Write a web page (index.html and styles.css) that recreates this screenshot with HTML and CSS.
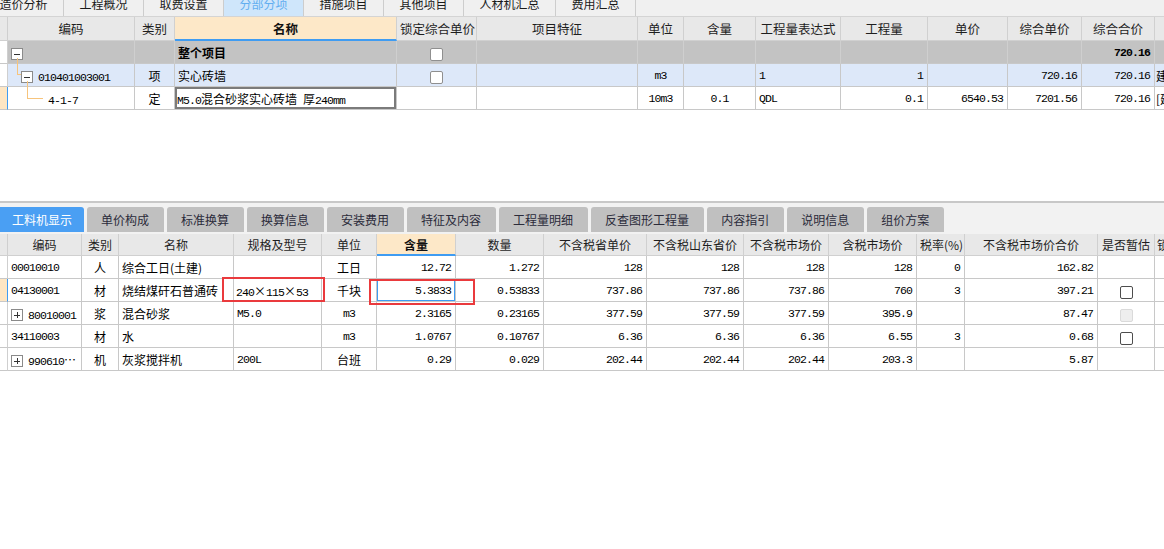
FILE: index.html
```html
<!DOCTYPE html>
<html lang="zh-CN">
<head>
<meta charset="utf-8">
<title>分部分项</title>
<link rel="stylesheet" href="styles.css">
</head>
<body>
<div class="app">
  <div class="toptabs">
    <div class="toptabs-inner">
      <div class="ttab">造价分析</div>
      <div class="ttab">工程概况</div>
      <div class="ttab">取费设置</div>
      <div class="ttab active">分部分项</div>
      <div class="ttab">措施项目</div>
      <div class="ttab">其他项目</div>
      <div class="ttab wide">人材机汇总</div>
      <div class="ttab">费用汇总</div>
    </div>
  </div>

  <div class="gridbox gridbox-top">
    <table class="grid grid-top">
      <colgroup>
        <col><col><col><col><col><col><col><col><col><col><col><col><col><col>
      </colgroup>
      <thead>
        <tr>
          <th class="ind"></th>
          <th>编码</th>
          <th>类别</th>
          <th class="hl">名称</th>
          <th>锁定综合单价</th>
          <th>项目特征</th>
          <th>单位</th>
          <th>含量</th>
          <th>工程量表达式</th>
          <th>工程量</th>
          <th>单价</th>
          <th>综合单价</th>
          <th>综合合价</th>
          <th>取费专业</th>
        </tr>
      </thead>
      <tbody>
        <tr class="row-total">
          <td class="ind"></td>
          <td class="code lvl0"><span class="exp"></span></td>
          <td></td>
          <td class="b">整个项目</td>
          <td class="c"><span class="cb"></span></td>
          <td></td><td></td><td></td><td></td><td></td><td></td><td></td>
          <td class="n r b">720.16</td>
          <td></td>
        </tr>
        <tr class="row-sel">
          <td class="ind"></td>
          <td class="code lvl1"><span class="branch branch-1"></span><span class="exp"></span><span class="n code-text">010401003001</span></td>
          <td class="c">项</td>
          <td>实心砖墙</td>
          <td class="c"><span class="cb"></span></td>
          <td></td>
          <td class="n c">m3</td>
          <td></td>
          <td class="n">1</td>
          <td class="n r">1</td>
          <td></td>
          <td class="n r">720.16</td>
          <td class="n r">720.16</td>
          <td class="tight">建筑工程</td>
        </tr>
        <tr class="row-cur">
          <td class="ind"></td>
          <td class="code lvl2"><span class="branch branch-2"></span><span class="n">4-1-7</span></td>
          <td class="c">定</td>
          <td class="edit"><span class="n">M5.0</span>混合砂浆实心砖墙<span class="n"> </span>厚<span class="n">240mm</span></td>
          <td></td>
          <td></td>
          <td class="n c">10m3</td>
          <td class="n c">0.1</td>
          <td class="n">QDL</td>
          <td class="n r">0.1</td>
          <td class="n r">6540.53</td>
          <td class="n r">7201.56</td>
          <td class="n r">720.16</td>
          <td class="tight">[建筑工程]</td>
        </tr>
      </tbody>
    </table>
  </div>

  <div class="blank"></div>
  <div class="divider"></div>

  <div class="subtabs">
    <div class="stab active">工料机显示</div>
    <div class="stab">单价构成</div>
    <div class="stab">标准换算</div>
    <div class="stab">换算信息</div>
    <div class="stab">安装费用</div>
    <div class="stab">特征及内容</div>
    <div class="stab">工程量明细</div>
    <div class="stab">反查图形工程量</div>
    <div class="stab">内容指引</div>
    <div class="stab">说明信息</div>
    <div class="stab">组价方案</div>
  </div>

  <div class="gridbox gridbox-bottom">
    <table class="grid grid-bottom">
      <colgroup>
        <col><col><col><col><col><col><col><col><col><col><col><col><col><col><col><col>
      </colgroup>
      <thead>
        <tr>
          <th class="ind"></th>
          <th>编码</th>
          <th>类别</th>
          <th>名称</th>
          <th>规格及型号</th>
          <th>单位</th>
          <th class="hl">含量</th>
          <th>数量</th>
          <th>不含税省单价</th>
          <th>不含税山东省价</th>
          <th>不含税市场价</th>
          <th>含税市场价</th>
          <th>税率(%)</th>
          <th>不含税市场价合价</th>
          <th>是否暂估</th>
          <th class="lft">锁定数量</th>
        </tr>
      </thead>
      <tbody>
        <tr>
          <td class="ind"></td>
          <td class="n">00010010</td>
          <td class="c">人</td>
          <td>综合工日(土建)</td>
          <td></td>
          <td class="c">工日</td>
          <td class="n r">12.72</td>
          <td class="n r">1.272</td>
          <td class="n r">128</td>
          <td class="n r">128</td>
          <td class="n r">128</td>
          <td class="n r">128</td>
          <td class="n r">0</td>
          <td class="n r">162.82</td>
          <td></td>
          <td></td>
        </tr>
        <tr class="row-cur">
          <td class="ind"></td>
          <td class="n">04130001</td>
          <td class="c">材</td>
          <td>烧结煤矸石普通砖</td>
          <td class="spec"><span class="n">240</span>×<span class="n">115</span>×<span class="n">53</span></td>
          <td class="c">千块</td>
          <td class="n r sel">5.3833</td>
          <td class="n r">0.53833</td>
          <td class="n r">737.86</td>
          <td class="n r">737.86</td>
          <td class="n r">737.86</td>
          <td class="n r">760</td>
          <td class="n r">3</td>
          <td class="n r">397.21</td>
          <td class="c"><span class="cb dark"></span></td>
          <td></td>
        </tr>
        <tr>
          <td class="ind"></td>
          <td class="code-b"><span class="exp plus"></span><span class="n code-text">80010001</span></td>
          <td class="c">浆</td>
          <td>混合砂浆</td>
          <td class="n">M5.0</td>
          <td class="n c">m3</td>
          <td class="n r">2.3165</td>
          <td class="n r">0.23165</td>
          <td class="n r">377.59</td>
          <td class="n r">377.59</td>
          <td class="n r">377.59</td>
          <td class="n r">395.9</td>
          <td></td>
          <td class="n r">87.47</td>
          <td class="c"><span class="cb off"></span></td>
          <td></td>
        </tr>
        <tr>
          <td class="ind"></td>
          <td class="n">34110003</td>
          <td class="c">材</td>
          <td>水</td>
          <td></td>
          <td class="n c">m3</td>
          <td class="n r">1.0767</td>
          <td class="n r">0.10767</td>
          <td class="n r">6.36</td>
          <td class="n r">6.36</td>
          <td class="n r">6.36</td>
          <td class="n r">6.55</td>
          <td class="n r">3</td>
          <td class="n r">0.68</td>
          <td class="c"><span class="cb dark"></span></td>
          <td></td>
        </tr>
        <tr>
          <td class="ind"></td>
          <td class="code-b"><span class="exp plus"></span><span class="n code-text">990610</span>…</td>
          <td class="c">机</td>
          <td>灰浆搅拌机</td>
          <td class="n">200L</td>
          <td class="c">台班</td>
          <td class="n r">0.29</td>
          <td class="n r">0.029</td>
          <td class="n r">202.44</td>
          <td class="n r">202.44</td>
          <td class="n r">202.44</td>
          <td class="n r">203.3</td>
          <td></td>
          <td class="n r">5.87</td>
          <td></td>
          <td></td>
        </tr>
      </tbody>
    </table>
    <div class="mark mark-spec"></div>
    <div class="mark mark-qty"></div>
  </div>
</div>
</body>
</html>
```

FILE: styles.css
```css
* { box-sizing: border-box; }

html, body {
  margin: 0;
  padding: 0;
  background: #ffffff;
}

body {
  width: 1164px;
  height: 549px;
  overflow: hidden;
  font-family: "Noto Sans CJK SC", "Microsoft YaHei", sans-serif;
  font-size: 12px;
  color: #111;
}

.app {
  display: flex;
  flex-direction: column;
  width: 1164px;
}

/* ---------- top tabs ---------- */
.toptabs {
  height: 17px;
  background: #f0f0f0;
  border-bottom: 1px solid #d4d4d4;
  overflow: hidden;
}

.toptabs-inner {
  display: flex;
  margin-left: -16px;
}

.ttab {
  width: 80px;
  height: 16px;
  border-right: 1px solid #cdcdcd;
  text-align: center;
  line-height: 8px;
  font-size: 12px;
  color: #1a1a1a;
  flex: none;
}

.ttab.wide { width: 92px; }

.ttab.active {
  background: #cfe6fb;
  color: #63aef0;
}

/* ---------- grids ---------- */
.gridbox {
  overflow: hidden;
  position: relative;
  flex: none;
}

.grid {
  border-collapse: separate;
  border-spacing: 0;
  table-layout: fixed;
}

.grid-top { width: 1235px; }
.grid-bottom { width: 1207px; }

.grid-top col:nth-child(1) { width: 8px; }
.grid-top col:nth-child(2) { width: 127px; }
.grid-top col:nth-child(3) { width: 40px; }
.grid-top col:nth-child(4) { width: 222px; }
.grid-top col:nth-child(5) { width: 80px; }
.grid-top col:nth-child(6) { width: 161px; }
.grid-top col:nth-child(7) { width: 46px; }
.grid-top col:nth-child(8) { width: 72px; }
.grid-top col:nth-child(9) { width: 85px; }
.grid-top col:nth-child(10) { width: 87px; }
.grid-top col:nth-child(11) { width: 80px; }
.grid-top col:nth-child(12) { width: 74px; }
.grid-top col:nth-child(13) { width: 73px; }
.grid-top col:nth-child(14) { width: 80px; }

.grid-bottom col:nth-child(1) { width: 8px; }
.grid-bottom col:nth-child(2) { width: 74px; }
.grid-bottom col:nth-child(3) { width: 37px; }
.grid-bottom col:nth-child(4) { width: 115px; }
.grid-bottom col:nth-child(5) { width: 88px; }
.grid-bottom col:nth-child(6) { width: 55px; }
.grid-bottom col:nth-child(7) { width: 79px; }
.grid-bottom col:nth-child(8) { width: 88px; }
.grid-bottom col:nth-child(9) { width: 103px; }
.grid-bottom col:nth-child(10) { width: 97px; }
.grid-bottom col:nth-child(11) { width: 85px; }
.grid-bottom col:nth-child(12) { width: 88px; }
.grid-bottom col:nth-child(13) { width: 48px; }
.grid-bottom col:nth-child(14) { width: 133px; }
.grid-bottom col:nth-child(15) { width: 57px; }
.grid-bottom col:nth-child(16) { width: 52px; }

.grid th,
.grid td {
  padding: 0 3px;
  white-space: nowrap;
  overflow: hidden;
  text-align: left;
  vertical-align: middle;
}

.grid th {
  background: #e8e8e8;
  font-weight: normal;
  color: #1e1e1e;
  text-align: center;
  border-right: 1px solid #d0d0d0;
  border-bottom: 1px solid #d0d0d0;
  font-size: 12.5px;
}

.grid-top th { height: 24px; }
.grid-bottom th { height: 22px; font-size: 12px; }

.grid th.hl {
  background: #fde8c8;
  font-weight: bold;
  color: #111;
  border-bottom: 2px solid #3f9cf2;
}

.grid th.lft {
  text-align: left;
  padding-left: 2px;
}

.grid td {
  height: 23px;
  border-right: 1px solid #c8c8c8;
  border-bottom: 1px solid #c8c8c8;
  color: #000;
}

.grid .ind {
  padding: 0;
  border-right: 1px solid #cfcfcf;
  background: #ffffff;
}

.grid th.ind { background: #e8e8e8; }

.grid tr.row-cur td.ind {
  background: #fde6c4;
  border-right: 1px solid #3f9cf2;
}

.grid-top tr.row-total td:not(.ind) {
  background: #c3c3c3;
  border-right-color: #cfcfcf;
}

.grid-top tr.row-sel td:not(.ind) {
  background: #dde8f9;
}

.grid td.c { text-align: center; }
.grid td.r { text-align: right; }
.grid td.b { font-weight: bold; }
.grid td.tight { padding-left: 1px; }

.n {
  font-family: "Liberation Mono", "Noto Sans CJK SC", monospace;
  font-size: 11.5px;
  letter-spacing: -0.9px;
}

.grid td.n.r { padding-right: 4px; }

.grid td.spec { padding-left: 2px; }

/* tree / code cells */
.grid td.code {
  position: relative;
  overflow: visible;
}

.grid td.lvl0 { padding-left: 3px; }
.grid td.lvl1 { padding-left: 13px; }
.grid td.lvl2 { padding-left: 40px; }

.grid td.code-b { padding-left: 3px; }

.code-text { margin-left: 5px; }

.exp {
  display: inline-block;
  position: relative;
  width: 12px;
  height: 12px;
  border: 1px solid #8a8a8a;
  background: #ffffff;
  vertical-align: -2px;
}

.exp::before {
  content: "";
  position: absolute;
  left: 2px;
  right: 2px;
  top: 5px;
  height: 1px;
  background: #333;
}

.exp.plus::after {
  content: "";
  position: absolute;
  top: 2px;
  bottom: 2px;
  left: 5px;
  width: 1px;
  background: #333;
}

.branch {
  position: absolute;
  border-left: 1px solid #f7c47c;
  border-bottom: 1px solid #f7c47c;
}

.branch-1 {
  left: 9px;
  top: -6px;
  width: 4px;
  height: 17px;
}

.branch-2 {
  left: 19px;
  top: -6px;
  width: 16px;
  height: 18px;
}

.grid td.edit {
  padding-left: 2px;
  box-shadow: inset 0 0 0 2px #7b7b7b;
}

.grid td.sel {
  box-shadow: inset 0 0 0 1px #3f9cf2;
}

/* checkboxes */
.cb {
  display: inline-block;
  width: 13px;
  height: 13px;
  border: 1px solid #8f8f8f;
  border-radius: 2px;
  background: #ffffff;
  vertical-align: middle;
}

.cb.dark { border-color: #4d4d4d; }

.cb.off {
  border-color: #dadada;
  background: #eeeeee;
}

/* middle blank + divider */
.blank {
  height: 91px;
  background: #ffffff;
}

.divider {
  height: 2px;
  background: #c8c8c8;
}

/* bottom tabs */
.subtabs {
  display: flex;
  align-items: flex-start;
  gap: 3px;
  height: 31px;
  padding-top: 4px;
  background: #f2f2f2;
}

.stab {
  flex: none;
  height: 25px;
  line-height: 26px;
  padding: 0 15px 0 14px;
  background: #c0c0c0;
  border-radius: 3px 3px 0 0;
  color: #2b2b3a;
  font-size: 12px;
}

.stab.active {
  padding: 0 12px;
  background: #4a9ff3;
  color: #ffffff;
  border-radius: 0 3px 0 0;
}

/* red annotation boxes */
.mark {
  position: absolute;
  border: 2px solid #ea3a3d;
}

.mark-spec {
  left: 222px;
  top: 43px;
  width: 103px;
  height: 25px;
}

.mark-qty {
  left: 369px;
  top: 45px;
  width: 106px;
  height: 26px;
}
```
